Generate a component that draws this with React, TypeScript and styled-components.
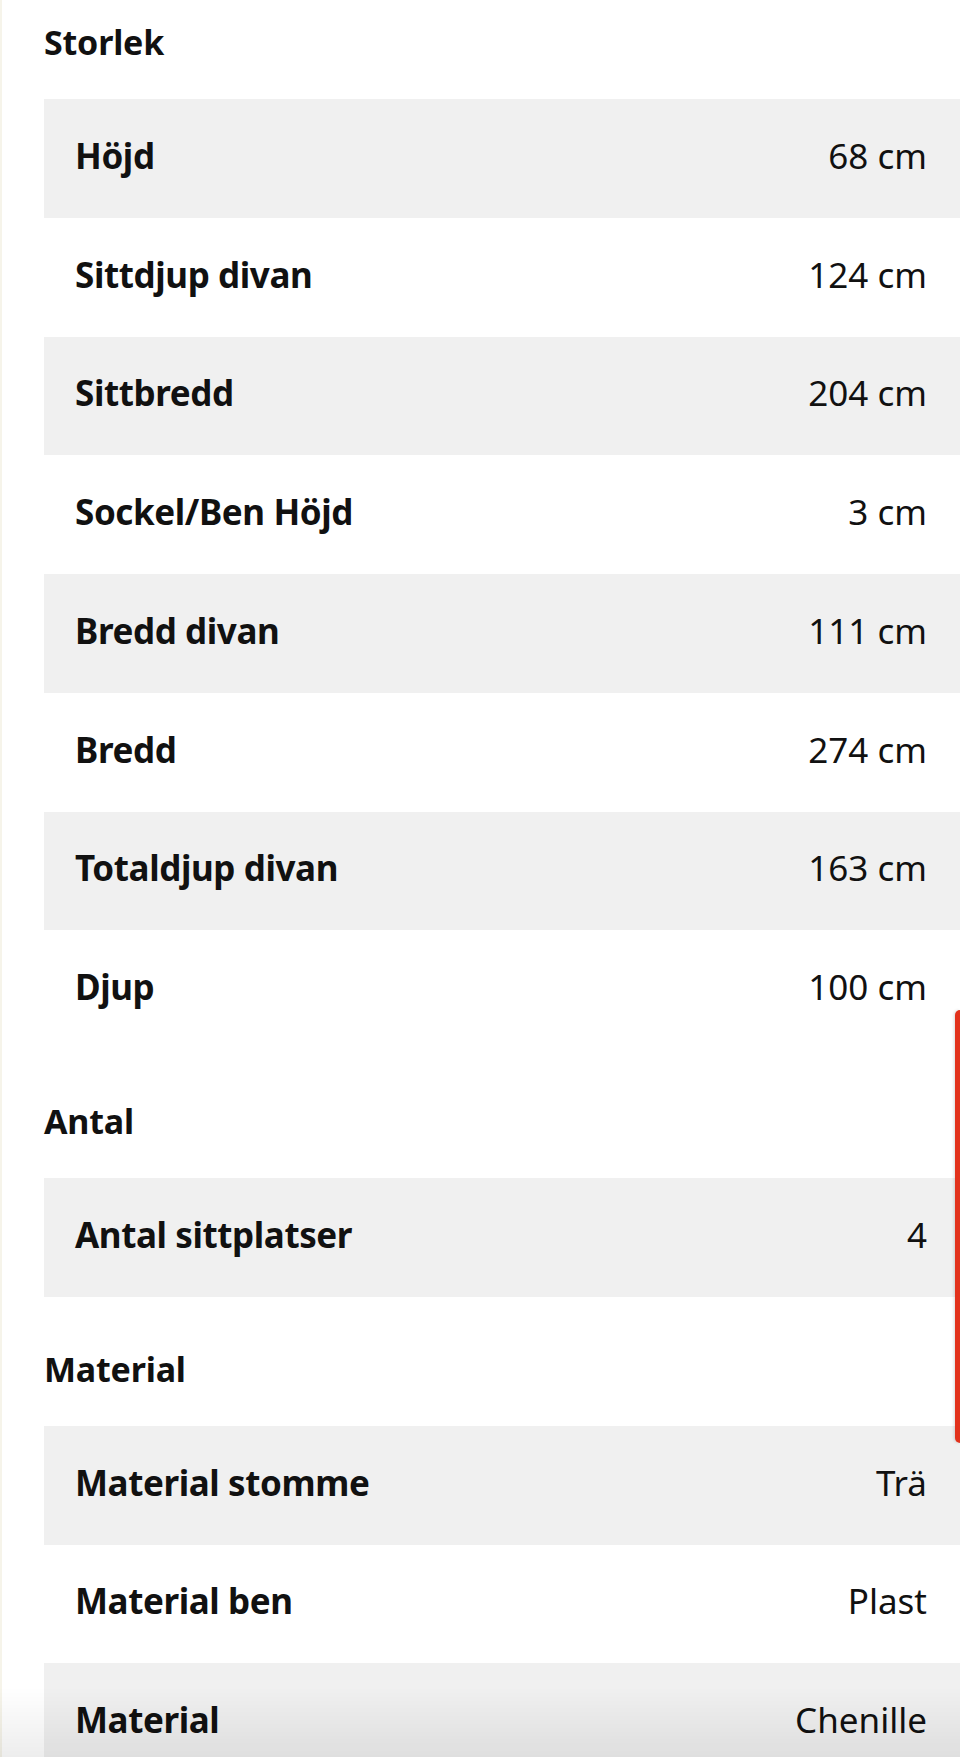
import React from "react";
import styled, { createGlobalStyle } from "styled-components";

const GlobalStyle = createGlobalStyle`
  html, body {
    margin: 0;
    padding: 0;
    background: #ffffff;
  }
  body {
    font-family: "Noto Sans", "Open Sans", sans-serif;
    color: #111111;
    -webkit-font-smoothing: antialiased;
  }
`;

type Spec = { label: string; value: string };
type Section = { title: string; rows: Spec[] };

const sections: Section[] = [
  {
    title: "Storlek",
    rows: [
      { label: "Höjd", value: "68 cm" },
      { label: "Sittdjup divan", value: "124 cm" },
      { label: "Sittbredd", value: "204 cm" },
      { label: "Sockel/Ben Höjd", value: "3 cm" },
      { label: "Bredd divan", value: "111 cm" },
      { label: "Bredd", value: "274 cm" },
      { label: "Totaldjup divan", value: "163 cm" },
      { label: "Djup", value: "100 cm" },
    ],
  },
  {
    title: "Antal",
    rows: [{ label: "Antal sittplatser", value: "4" }],
  },
  {
    title: "Material",
    rows: [
      { label: "Material stomme", value: "Trä" },
      { label: "Material ben", value: "Plast" },
      { label: "Material", value: "Chenille" },
    ],
  },
];

export default function App() {
  return (
    <>
      <GlobalStyle />
      <Page>
        {sections.map((section) => (
          <Group key={section.title}>
            <Heading>{section.title}</Heading>
            <Table>
              {section.rows.map((row, i) => (
                <Row key={row.label} $striped={i % 2 === 0}>
                  <Label>{row.label}</Label>
                  <Value>{row.value}</Value>
                </Row>
              ))}
            </Table>
          </Group>
        ))}
      </Page>
      <SideTab />
      <BottomFade />
    </>
  );
}

const Page = styled.main`
  display: flex;
  flex-direction: column;
  gap: 50px;
  min-height: 1757px;
  padding: 20px 0 0 42px;
  box-sizing: border-box;
  border-left: 2px solid #f6f4ea;
`;

const Group = styled.section`
  display: flex;
  flex-direction: column;
`;

const Heading = styled.h2`
  margin: 0 0 35px;
  font-size: 34px;
  line-height: 44px;
  font-weight: 700;
  letter-spacing: -0.2px;
`;

const Table = styled.div`
  display: flex;
  flex-direction: column;
`;

const Row = styled.div<{ $striped: boolean }>`
  display: flex;
  align-items: center;
  justify-content: space-between;
  height: 118.75px;
  padding: 0 33px 6px 31px;
  box-sizing: border-box;
  background: ${(p) => (p.$striped ? "#f0f0f0" : "#ffffff")};
`;

const Label = styled.span`
  font-size: 35px;
  font-weight: 700;
  letter-spacing: -0.4px;
`;

const Value = styled.span`
  font-size: 35px;
  font-weight: 400;
`;

const SideTab = styled.div`
  position: fixed;
  right: 0;
  top: 1010px;
  width: 5px;
  height: 433px;
  background: #e2321c;
  border-radius: 7px 0 0 7px;
  box-shadow: -1px 0 3px rgba(0, 0, 0, 0.15);
`;

const BottomFade = styled.div`
  position: fixed;
  left: 0;
  right: 0;
  bottom: 0;
  height: 70px;
  pointer-events: none;
  background: linear-gradient(
    to bottom,
    rgba(0, 0, 0, 0) 0%,
    rgba(0, 0, 0, 0.07) 100%
  );
`;
